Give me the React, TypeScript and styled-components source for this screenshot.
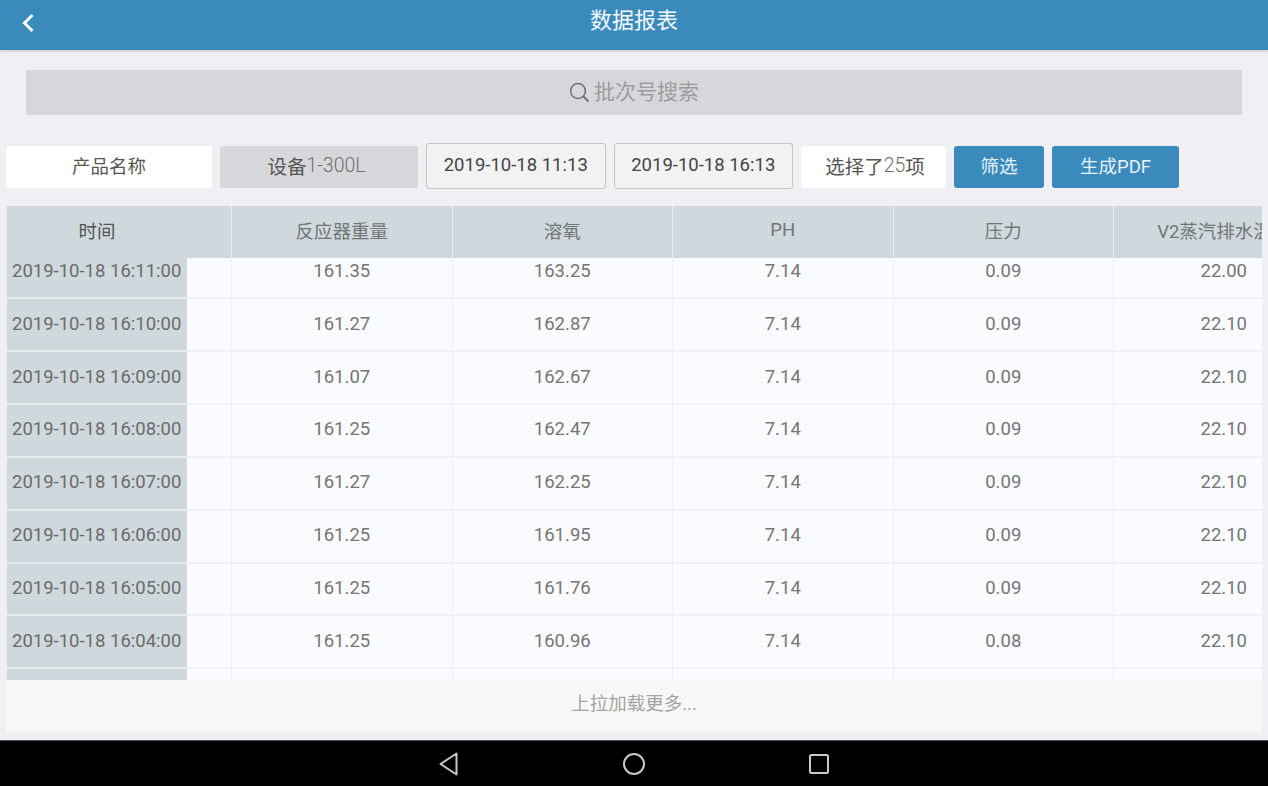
import styled, { createGlobalStyle } from "styled-components";

const FONT = `Roboto, "Noto Sans CJK SC", sans-serif`;

const GlobalStyle = createGlobalStyle`
  html, body {
    margin: 0;
    padding: 0;
    background: #efeff4;
  }
  * {
    box-sizing: border-box;
  }
`;

const Page = styled.div`
  width: 1268px;
  height: 786px;
  display: flex;
  flex-direction: column;
  overflow: hidden;
  background: #efeff4;
  font-family: ${FONT};
`;

const Header = styled.header`
  position: relative;
  z-index: 2;
  flex: none;
  height: 50px;
  padding: 0 21px;
  display: grid;
  grid-template-columns: 40px 1fr 40px;
  background: #3a8bbc;
  box-shadow: 0 1px 3px rgba(0, 0, 0, 0.2);
`;

const BackButton = styled.div`
  height: 45px;
  display: flex;
  align-items: center;
`;

const Title = styled.h1`
  margin: 0;
  font-size: 22px;
  font-weight: 400;
  line-height: 41px;
  text-align: center;
  color: #f4f8fb;
`;

const SearchBar = styled.div`
  flex: none;
  height: 45px;
  margin: 20px 26px 0;
  padding-bottom: 5px;
  display: flex;
  align-items: center;
  justify-content: center;
  gap: 4px;
  background: #d7d7db;
  font-size: 21px;
  color: #9b9b9f;
`;

const SearchIcon = styled.svg`
  margin-top: 5px;
`;

const Toolbar = styled.div`
  flex: none;
  height: 46px;
  margin: 28px 0 0 6px;
  display: flex;
  align-items: center;
  gap: 8px;
`;

const Chip = styled.div<{ $width: number; $bg?: string; $size?: number; $shift?: number }>`
  width: ${(p) => p.$width}px;
  height: 42px;
  margin-top: 2px;
  padding-bottom: 4px;
  padding-left: ${(p) => (p.$shift && p.$shift > 0 ? p.$shift : 0)}px;
  padding-right: ${(p) => (p.$shift && p.$shift < 0 ? -p.$shift : 0)}px;
  display: flex;
  align-items: center;
  justify-content: center;
  border-radius: 3px;
  background: ${(p) => p.$bg || "#ffffff"};
  font-size: ${(p) => p.$size || 18.5}px;
  color: #555;
`;

const ThinText = styled.span`
  font-weight: 300;
  color: #6f6f6f;
`;

const DateBox = styled.div`
  width: 179.5px;
  height: 46px;
  padding-bottom: 3px;
  display: flex;
  align-items: center;
  justify-content: center;
  border: 1px solid #c4c4c6;
  border-radius: 3px;
  background: #f2f2f3;
  font-size: 18.5px;
  color: #444;
`;

const ActionButton = styled.div<{ $width: number }>`
  width: ${(p) => p.$width}px;
  height: 42px;
  margin-top: 2px;
  padding-bottom: 5px;
  display: flex;
  align-items: center;
  justify-content: center;
  border-radius: 3px;
  background: #3a8bbc;
  font-size: 18.5px;
  color: #e8f1f7;
`;

const TableWrap = styled.div`
  flex: none;
  height: 474px;
  margin: 17px 6px 0 7px;
  overflow: hidden;
  display: flex;
  flex-direction: column;
`;

const HeadRow = styled.div`
  position: relative;
  z-index: 1;
  flex: none;
  height: 52px;
  display: flex;
  background: #cfd8dc;
`;

const HeadCell = styled.div<{ $first?: boolean }>`
  flex: none;
  width: ${(p) => (p.$first ? "180px" : "220.5px")};
  margin-right: ${(p) => (p.$first ? "44px" : "0")};
  padding-bottom: 5px;
  display: flex;
  align-items: center;
  justify-content: center;
  white-space: nowrap;
  border-left: ${(p) => (p.$first ? "none" : "1px solid #e9edf0")};
  font-size: 18.5px;
  color: ${(p) => (p.$first ? "#555" : "#707578")};
`;

const Rows = styled.div`
  margin-top: -11.5px;
`;

const Row = styled.div`
  height: 52.85px;
  display: flex;
  background: #fafbff;
  border-bottom: 2px solid #eff1f6;
`;

const TimeSlot = styled.div`
  flex: none;
  width: 224px;
`;

const TimeCell = styled.div`
  width: 180px;
  height: 52.85px;
  padding: 0 0 2px 5px;
  display: flex;
  align-items: center;
  white-space: nowrap;
  background: #cfd8dc;
  border-bottom: 2px solid #e6ebee;
  font-size: 18.5px;
  color: #6b6b6b;
`;

const Cell = styled.div`
  flex: none;
  width: 220.5px;
  padding-bottom: 2px;
  display: flex;
  align-items: center;
  justify-content: center;
  border-left: 1px solid #eceef3;
  font-size: 18.5px;
  color: #757575;
`;

const LoadMore = styled.div`
  flex: none;
  height: 53px;
  margin: 0 6px;
  padding-bottom: 9px;
  display: flex;
  align-items: center;
  justify-content: center;
  background: #f7f7f7;
  font-size: 18.5px;
  color: #a3a3a3;
`;

const NavBar = styled.nav`
  flex: none;
  height: 46px;
  margin-top: 7px;
  display: flex;
  align-items: center;
  justify-content: center;
  gap: 162px;
  background: #000;
  border-top: 1px solid #55555a;
`;

const columns = ["反应器重量", "溶氧", "PH", "压力", "V2蒸汽排水温度"];

const rows = [
  ["2019-10-18 16:11:00", "161.35", "163.25", "7.14", "0.09", "22.00"],
  ["2019-10-18 16:10:00", "161.27", "162.87", "7.14", "0.09", "22.10"],
  ["2019-10-18 16:09:00", "161.07", "162.67", "7.14", "0.09", "22.10"],
  ["2019-10-18 16:08:00", "161.25", "162.47", "7.14", "0.09", "22.10"],
  ["2019-10-18 16:07:00", "161.27", "162.25", "7.14", "0.09", "22.10"],
  ["2019-10-18 16:06:00", "161.25", "161.95", "7.14", "0.09", "22.10"],
  ["2019-10-18 16:05:00", "161.25", "161.76", "7.14", "0.09", "22.10"],
  ["2019-10-18 16:04:00", "161.25", "160.96", "7.14", "0.08", "22.10"],
  ["", "", "", "", "", ""],
];

const App = () => {
  return (
    <Page>
      <GlobalStyle />
      <Header>
        <BackButton>
          <svg width="14" height="20" viewBox="0 0 14 20" fill="none">
            <path d="M11.5 2 L3.5 10 L11.5 18" stroke="#fff" strokeWidth="3" />
          </svg>
        </BackButton>
        <Title>数据报表</Title>
      </Header>

      <SearchBar>
        <SearchIcon width="21" height="21" viewBox="0 0 21 21" fill="none" stroke="#6f6f73">
          <circle cx="9" cy="9" r="7.4" strokeWidth="1.5" />
          <path d="M14.5 14.5 L19.5 19.5" strokeWidth="2" />
        </SearchIcon>
        批次号搜索
      </SearchBar>

      <Toolbar>
        <Chip $width={206}>产品名称</Chip>
        <Chip $width={198} $bg="#d7d7db" $size={19.5} $shift={-5}>
          设备<ThinText>1-300L</ThinText>
        </Chip>
        <DateBox>2019-10-18 11:13</DateBox>
        <DateBox>2019-10-18 16:13</DateBox>
        <Chip $width={145} $size={19.5} $shift={3}>
          选择了<ThinText>25</ThinText>项
        </Chip>
        <ActionButton $width={90}>筛选</ActionButton>
        <ActionButton $width={127}>生成PDF</ActionButton>
      </Toolbar>

      <TableWrap>
        <HeadRow>
          <HeadCell $first>时间</HeadCell>
          {columns.map((c) => (
            <HeadCell key={c}>{c}</HeadCell>
          ))}
        </HeadRow>
        <Rows>
          {rows.map((r, i) => (
            <Row key={i}>
              <TimeSlot>
                <TimeCell>{r[0]}</TimeCell>
              </TimeSlot>
              {r.slice(1).map((v, j) => (
                <Cell key={j}>{v}</Cell>
              ))}
            </Row>
          ))}
        </Rows>
      </TableWrap>

      <LoadMore>上拉加载更多...</LoadMore>

      <NavBar>
        <svg width="22" height="26" viewBox="0 0 22 26" fill="none" stroke="#c9c9c9" strokeWidth="2">
          <path d="M18.5 2.5 V23.5 L2.5 13 Z" strokeLinejoin="round" />
        </svg>
        <svg width="24" height="24" viewBox="0 0 24 24" fill="none" stroke="#c9c9c9" strokeWidth="2">
          <circle cx="12" cy="12" r="10" />
        </svg>
        <svg width="22" height="24" viewBox="0 0 22 24" fill="none" stroke="#c9c9c9" strokeWidth="2">
          <rect x="2" y="3" width="18" height="18" rx="1.5" />
        </svg>
      </NavBar>
    </Page>
  );
};

export default App;
